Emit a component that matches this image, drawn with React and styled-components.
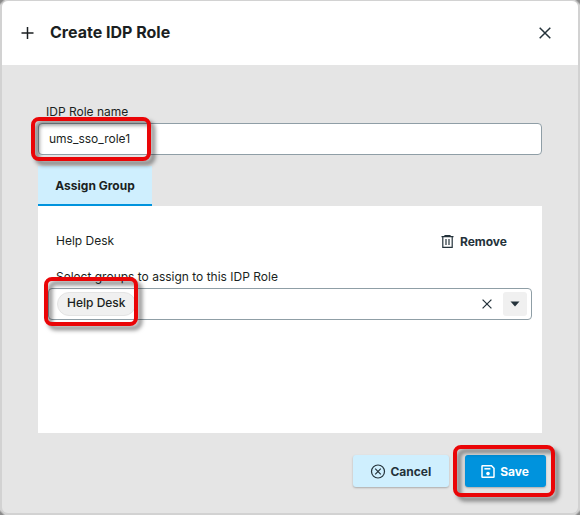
import React, { useState } from "react";
import styled, { createGlobalStyle, css } from "styled-components";

const GlobalStyle = createGlobalStyle`
  *, *::before, *::after { box-sizing: border-box; }
  html, body, #root { height: 100%; }
  body {
    margin: 0;
    background: #d2d2d2;
    color: #1b1f22;
    font-family: Inter, "Liberation Sans", sans-serif;
    font-size: 12px;
    line-height: 16px;
  }
  button, input { font: inherit; color: inherit; }
`;

const Backdrop = styled.div`
  min-height: 100%;
  display: flex;
  padding: 1px 2px 2px;
  background: linear-gradient(135deg, #8a8a8a 0 2px, transparent 4px),
    linear-gradient(225deg, #8a8a8a 0 2px, transparent 4px),
    linear-gradient(45deg, #8a8a8a 0 2px, transparent 4px),
    linear-gradient(315deg, #8a8a8a 0 2px, transparent 4px), #d2d2d2;
`;

const Dialog = styled.section`
  flex: 1;
  display: flex;
  flex-direction: column;
  min-width: 0;
  background: #e5e5e5;
  border-radius: 6px;
  overflow: hidden;
`;

const Header = styled.header`
  display: flex;
  align-items: center;
  gap: 16px;
  height: 64px;
  padding: 0 24px 0 18px;
  background: #fff;
`;

const Title = styled.h1`
  flex: 1;
  margin: 0;
  padding-bottom: 2px;
  font-size: 16px;
  line-height: 24px;
  font-weight: 700;
`;

const IconButton = styled.button`
  display: grid;
  place-items: center;
  width: 18px;
  height: 24px;
  padding: 0;
  border: 0;
  background: none;
  cursor: pointer;
`;

const Body = styled.main`
  flex: 1;
  display: flex;
  flex-direction: column;
  padding: 39px 36px 22px;
`;

const Label = styled.label`
  display: block;
  margin-bottom: 3px;
  padding-left: 8px;
`;

const controlBorder = css`
  width: 100%;
  height: 32px;
  border: 1px solid #8f9ea6;
  border-radius: 4px;
  background: #fff;
`;

const FieldWrap = styled.div`
  position: relative;
`;

const TextInput = styled.input`
  ${controlBorder}
  display: block;
  padding: 0 10px 2px;
  outline: none;
`;

const Highlight = styled.span`
  position: absolute;
  top: ${(p) => p.$top};
  left: ${(p) => p.$left};
  width: ${(p) => p.$width};
  height: ${(p) => p.$height};
  border: 4px solid #ea0507;
  border-radius: 8px;
  filter: drop-shadow(4px 4px 2px rgba(0, 0, 0, 0.5));
  pointer-events: none;
  z-index: 1;
`;

const Tabs = styled.div`
  display: flex;
  margin-top: 11px;
`;

const Tab = styled.button`
  min-width: 114px;
  height: 40px;
  padding: 2px 16px 0;
  border: 0;
  border-bottom: 2px solid #0093dd;
  background: #cfeffe;
  font-weight: 700;
`;

const Panel = styled.div`
  flex: 1;
  padding: 19px 10px;
  background: #fff;
`;

const GroupRow = styled.div`
  display: flex;
  align-items: center;
  justify-content: space-between;
  height: 32px;
  margin-bottom: 12px;
  padding: 0 25px 0 8px;
`;

const TextButton = styled.button`
  display: flex;
  align-items: center;
  gap: 6px;
  padding: 2px 0 0;
  border: 0;
  background: none;
  color: #24323a;
  font-weight: 700;
  cursor: pointer;
`;

const Combo = styled.div`
  ${controlBorder}
  display: flex;
  align-items: center;
  padding: 0 4px 0 8px;
`;

const Chip = styled.span`
  padding: 2px 9px 4px;
  border: 1px solid #e4e4e4;
  border-radius: 12px;
  background: #f0f0f0;
  font-weight: 500;
`;

const ComboInput = styled.input`
  flex: 1;
  min-width: 0;
  border: 0;
  outline: none;
  background: none;
`;

const ToggleButton = styled(IconButton)`
  width: 24px;
  margin-left: 7px;
  border-radius: 3px;
  background: #f0f0f0;
`;

const Footer = styled.footer`
  display: flex;
  justify-content: flex-end;
  gap: 16px;
  padding: 0 32px 26px;
`;

const ActionButton = styled.button`
  display: flex;
  align-items: center;
  gap: 4px;
  height: 32px;
  padding: ${(p) => (p.$primary ? "1px 17px 0 15px" : "1px 18px 0 17px")};
  border: 0;
  border-radius: 3px;
  background: ${(p) => (p.$primary ? "#0093dd" : "#cfeffe")};
  color: ${(p) => (p.$primary ? "#fff" : "#24323a")};
  font-weight: 700;
  box-shadow: 0 1px 2px rgba(0, 0, 0, 0.25);
  cursor: pointer;
`;

const PlusIcon = () => (
  <svg width="14" height="14" viewBox="0 0 14 14" fill="none" stroke="#1b1f22" strokeWidth="1.5" aria-hidden="true">
    <path d="M7.5 1v12M1.5 7h12" />
  </svg>
);

const CrossIcon = ({ size }) => (
  <svg width={size} height={size} viewBox="0 0 12 12" fill="none" stroke="#24323a" strokeWidth="1.5" aria-hidden="true">
    <path d="M.7.7l10.6 10.6M11.3.7L.7 11.3" />
  </svg>
);

const TrashIcon = () => (
  <svg width="13" height="14" viewBox="0 0 13 14" fill="none" stroke="#24323a" strokeWidth="1.2" aria-hidden="true">
    <path d="M.5 1.6h12M4 1.4V.6h5v.8M1.8 1.6v10.8h9.4V1.6M5 4v6M8 4v6" />
  </svg>
);

const CancelIcon = () => (
  <svg width="16" height="16" viewBox="0 0 16 16" fill="none" stroke="#24323a" strokeWidth="1.2" aria-hidden="true">
    <circle cx="8" cy="7.5" r="6.5" />
    <path d="M5.2 4.7l5.6 5.6M10.8 4.7l-5.6 5.6" />
  </svg>
);

const SaveIcon = () => (
  <svg width="16" height="16" viewBox="0 0 16 16" fill="none" stroke="#fff" strokeWidth="1.5" aria-hidden="true">
    <path d="M2.5 1.7h9L14 4.2v8.6a.5.5 0 0 1-.5.5h-11a.5.5 0 0 1-.5-.5V2.2a.5.5 0 0 1 .5-.5z" />
    <path d="M4.4 4.8h6" />
    <circle cx="8" cy="9.6" r="1.8" fill="#fff" stroke="none" />
  </svg>
);

export default function App() {
  const [name, setName] = useState("ums_sso_role1");
  return (
    <>
      <GlobalStyle />
      <Backdrop>
        <Dialog role="dialog" aria-labelledby="title">
          <Header>
            <PlusIcon />
            <Title id="title">Create IDP Role</Title>
            <IconButton type="button" aria-label="Close">
              <CrossIcon size={12} />
            </IconButton>
          </Header>
          <Body>
            <Label htmlFor="role-name">IDP Role name</Label>
            <FieldWrap>
              <TextInput id="role-name" value={name} onChange={(e) => setName(e.target.value)} />
              <Highlight $top="-6px" $left="-7px" $width="120px" $height="44px" />
            </FieldWrap>
            <Tabs role="tablist">
              <Tab type="button" role="tab" aria-selected="true">Assign Group</Tab>
            </Tabs>
            <Panel role="tabpanel">
              <GroupRow>
                <span>Help Desk</span>
                <TextButton type="button">
                  <TrashIcon />
                  Remove
                </TextButton>
              </GroupRow>
              <Label htmlFor="groups">Select groups to assign to this IDP Role</Label>
              <FieldWrap>
                <Combo>
                  <Chip>Help Desk</Chip>
                  <ComboInput id="groups" role="combobox" aria-expanded="false" />
                  <IconButton type="button" aria-label="Clear">
                    <CrossIcon size={10} />
                  </IconButton>
                  <ToggleButton type="button" aria-label="Open list">
                    <svg width="10" height="6" viewBox="0 0 10 6" fill="#24323a" aria-hidden="true">
                      <path d="M.5.5h9L5 5.5z" />
                    </svg>
                  </ToggleButton>
                </Combo>
                <Highlight $top="-11px" $left="-4px" $width="94px" $height="49px" />
              </FieldWrap>
            </Panel>
          </Body>
          <Footer>
            <ActionButton type="button">
              <CancelIcon />
              Cancel
            </ActionButton>
            <FieldWrap>
              <ActionButton type="button" $primary>
                <SaveIcon />
                Save
              </ActionButton>
              <Highlight $top="-10px" $left="-12px" $width="102px" $height="52px" />
            </FieldWrap>
          </Footer>
        </Dialog>
      </Backdrop>
    </>
  );
}
